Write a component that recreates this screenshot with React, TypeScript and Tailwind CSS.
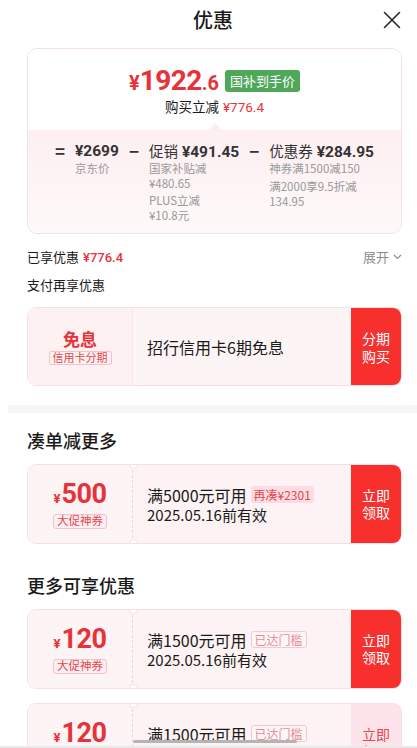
import React from 'react';

const num = "font-['Roboto','Noto_Sans_CJK_SC',sans-serif]";

function Notch({ pos }: { pos: 'top' | 'bottom' }) {
  return (
    <span
      className={
        pos === 'top'
          ? 'absolute left-[-4px] top-[-5px] w-[9px] h-[9px] rounded-full bg-white border border-[#f5e1e5]'
          : 'absolute left-[-4px] bottom-[-5px] w-[9px] h-[9px] rounded-full bg-white border border-[#f5e1e5]'
      }
    />
  );
}

type Coupon = {
  amount: string;
  title: string;
  tag: string;
  tagStyle: 'fill' | 'line';
  date: string;
  faded?: boolean;
};

function CouponCard({ c }: { c: Coupon }) {
  return (
    <div className="h-[80px] flex rounded-[9px] border border-[#f5e1e5] bg-[#fdf3f4] overflow-hidden">
      {/* 金额区 */}
      <div className="w-[104px] shrink-0 flex flex-col items-center justify-center bg-[#fdf4f5]">
        <div className={`${num} flex items-baseline h-[28px] leading-[28px] text-[#e8323a] font-bold`}>
          <span className="text-[13px] mr-[1px]">¥</span>
          <span className="text-[27px] tracking-[-0.5px]">{c.amount}</span>
        </div>
        <span className="mt-[6px] h-[15px] px-[3px] flex items-center rounded-[3px] border border-[#f2c3ca] bg-[#fdeef0] text-[11.5px] text-[#e4474f] leading-none">
          大促神券
        </span>
      </div>
      {/* 虚线分隔 */}
      <div className="relative w-0 border-l border-dashed border-[#f0d5da]">
        <Notch pos="top" />
        <Notch pos="bottom" />
      </div>
      {/* 说明区 */}
      <div className="flex-1 flex flex-col justify-center pl-[14px]">
        <div className="flex items-center h-[20px]">
          <span className="text-[16px] leading-[20px] text-[#1a1a1a]">{c.title}</span>
          {c.tagStyle === 'fill' ? (
            <span className="ml-[4px] h-[17px] px-[3px] flex items-center rounded-[3px] bg-[#fcdde3] text-[12px] leading-none text-[#e4474f]">
              {c.tag}
            </span>
          ) : (
            <span className="ml-[4px] h-[17px] px-[3px] flex items-center rounded-[3px] border border-[#f2c9d0] bg-[#fdf6f7] text-[12px] leading-none text-[#e58c97]">
              {c.tag}
            </span>
          )}
        </div>
        <div className="text-[15px] leading-[19px] text-[#1a1a1a]">{c.date}</div>
      </div>
      {/* 领取按钮 */}
      {c.faded ? (
        <div className="w-[50px] shrink-0 flex flex-col items-center justify-center bg-[#fce4ea] text-[#e4474f] text-[14px] leading-[17px]">
          <span>立即</span>
          <span>领取</span>
        </div>
      ) : (
        <div className="w-[50px] shrink-0 flex flex-col items-center justify-center bg-[#f7302e] text-white text-[14px] leading-[17px]">
          <span>立即</span>
          <span>领取</span>
        </div>
      )}
    </div>
  );
}

export default function App() {
  const moreCoupons: Coupon[] = [
    { amount: '120', title: '满1500元可用', tag: '已达门槛', tagStyle: 'line', date: '2025.05.16前有效' },
    { amount: '120', title: '满1500元可用', tag: '已达门槛', tagStyle: 'line', date: '2025.05.16前有效', faded: true },
  ];

  return (
    <div className="relative w-[417px] h-[748px] overflow-hidden bg-white text-[#1a1a1a] font-['Noto_Sans_CJK_SC',sans-serif]">
      <div className="ml-[8px] w-[410px]">
        {/* 标题栏 */}
        <div className="grid grid-cols-[1fr_auto_1fr] items-center h-[40px]">
          <div />
          <h1 className="text-[20px] font-medium leading-none">优惠</h1>
          <div className="flex justify-end pr-[17px]">
            <svg width="18" height="18" viewBox="0 0 18 18" fill="none" stroke="#2a2a2a" strokeWidth="1.6" strokeLinecap="round">
              <path d="M1.5 1.5 16.5 16.5M16.5 1.5 1.5 16.5" />
            </svg>
          </div>
        </div>

        <div className="pl-[19px] pr-[16px]">
          {/* 到手价卡片 */}
          <div className="mt-[8px] rounded-[10px] border border-[#f5e1e5] overflow-hidden">
            <div className="bg-white pt-[17px] pb-[15px] flex flex-col items-center">
              <div className="h-[30px] flex items-center gap-[6px]">
                <span className={`${num} flex items-baseline h-[30px] leading-[30px] font-bold text-[#e8323a]`}>
                  <span className="text-[20px]">¥</span>
                  <span className="text-[28px] tracking-[-0.6px]">1922</span>
                  <span className="text-[20px]">.6</span>
                </span>
                <span className="h-[22px] px-[5px] flex items-center rounded-[3px] bg-[#4fa85a] text-white text-[13px]">国补到手价</span>
              </div>
              <div className="mt-[1px] flex items-baseline h-[18px] leading-[18px] text-[13.5px]">
                <span>购买立减</span>
                <span className={`${num} ml-[4px] text-[#e8323a]`}>¥776.4</span>
              </div>
            </div>
            <div className="relative bg-gradient-to-b from-[#fdeff1] to-[#fef9f9] pt-[11px] pb-[10px]">
              <span className="absolute top-[-5px] left-1/2 -translate-x-1/2 w-[10px] h-[10px] rotate-45 bg-[#fdeff1]" />
              <div className="relative flex justify-center gap-[10px]">
                <span className="text-[17px] font-bold leading-[20px] text-[#333]">=</span>
                <div>
                  <div className={`${num} h-[20px] text-[15.5px] font-bold leading-[20px] text-[#333]`}>¥2699</div>
                  <div className="text-[11.5px] leading-[15px] text-[#999]">京东价</div>
                </div>
                <span className="text-[17px] font-bold leading-[20px] text-[#333]">−</span>
                <div className="shrink-0">
                  <div className="flex items-baseline h-[20px] leading-[20px] text-[#333]">
                    <span className="text-[14.5px]">促销</span>
                    <span className={`${num} ml-[4px] text-[15.5px] font-bold`}>¥491.45</span>
                  </div>
                  <div className="text-[11.5px] leading-[15px] text-[#999]">
                    <div>国家补贴减</div>
                    <div>¥480.65</div>
                    <div className="mt-[2px]">PLUS立减</div>
                    <div>¥10.8元</div>
                  </div>
                </div>
                <span className="text-[17px] font-bold leading-[20px] text-[#333]">−</span>
                <div className="shrink-0">
                  <div className="flex items-baseline h-[20px] leading-[20px] text-[#333]">
                    <span className="text-[14.5px]">优惠券</span>
                    <span className={`${num} ml-[4px] text-[15.5px] font-bold`}>¥284.95</span>
                  </div>
                  <div className="text-[11.5px] leading-[15px] text-[#999]">
                    <div>神券满1500减150</div>
                    <div className="mt-[3px]">满2000享9.5折减</div>
                    <div>134.95</div>
                  </div>
                </div>
              </div>
            </div>
          </div>

          {/* 已享优惠 */}
          <div className="mt-[13px] flex items-center justify-between h-[20px]">
            <div className="flex items-baseline leading-[20px] text-[13px]">
              <span>已享优惠</span>
              <span className={`${num} ml-[4px] text-[#e8323a] font-medium`}>¥776.4</span>
            </div>
            <div className="flex items-center gap-[4px] text-[13px] leading-[20px] text-[#8c8c8c]">
              展开
              <svg width="9" height="6" viewBox="0 0 9 6" fill="none" stroke="#8c8c8c" strokeWidth="1.2">
                <path d="M1 1l3.5 3.5L8 1" />
              </svg>
            </div>
          </div>
          <div className="mt-[8px] text-[13px] leading-[20px]">支付再享优惠</div>

          {/* 支付优惠卡片 */}
          <div className="mt-[12px] h-[79px] flex rounded-[9px] border border-[#f5e1e5] overflow-hidden">
            <div className="w-[105px] shrink-0 flex flex-col items-center justify-center bg-[#fdf1f2] border-r border-[#f8e6e9]">
              <span className="text-[17px] font-bold leading-[20px] text-[#e8323a]">免息</span>
              <span className="mt-[2px] h-[14px] px-[3px] flex items-center rounded-[2px] border border-[#f2c3ca] text-[11px] leading-none text-[#e4474f]">信用卡分期</span>
            </div>
            <div className="flex-1 flex items-center pl-[14px] bg-[#fdf5f5] text-[16px]">招行信用卡6期免息</div>
            <div className="w-[50px] shrink-0 flex flex-col items-center justify-center bg-[#f7302e] text-white text-[14px] leading-[18px]">
              <span>分期</span>
              <span>购买</span>
            </div>
          </div>
        </div>

        {/* 分隔带 */}
        <div className="mt-[19px] h-[8px] bg-[#f6f6f9]" />

        <div className="pl-[19px] pr-[16px]">
          <h2 className="mt-[15px] text-[18px] font-medium leading-[24px]">凑单减更多</h2>
          <div className="mt-[12px]">
            <CouponCard c={{ amount: '500', title: '满5000元可用', tag: '再凑¥2301', tagStyle: 'fill', date: '2025.05.16前有效' }} />
          </div>

          <h2 className="mt-[29px] text-[18px] font-medium leading-[24px]">更多可享优惠</h2>
          <div className="mt-[12px] flex flex-col gap-[14px]">
            {moreCoupons.map((c, i) => (
              <CouponCard key={i} c={c} />
            ))}
          </div>
        </div>
      </div>

      {/* 底部指示条 */}
      <div className="absolute left-[133px] bottom-[5px] w-[164px] h-[3px] rounded-full bg-[#b4b4b4]" />
      <div className="absolute left-0 bottom-0 w-full h-[2px] bg-[#e9e9e9]" />
    </div>
  );
}
